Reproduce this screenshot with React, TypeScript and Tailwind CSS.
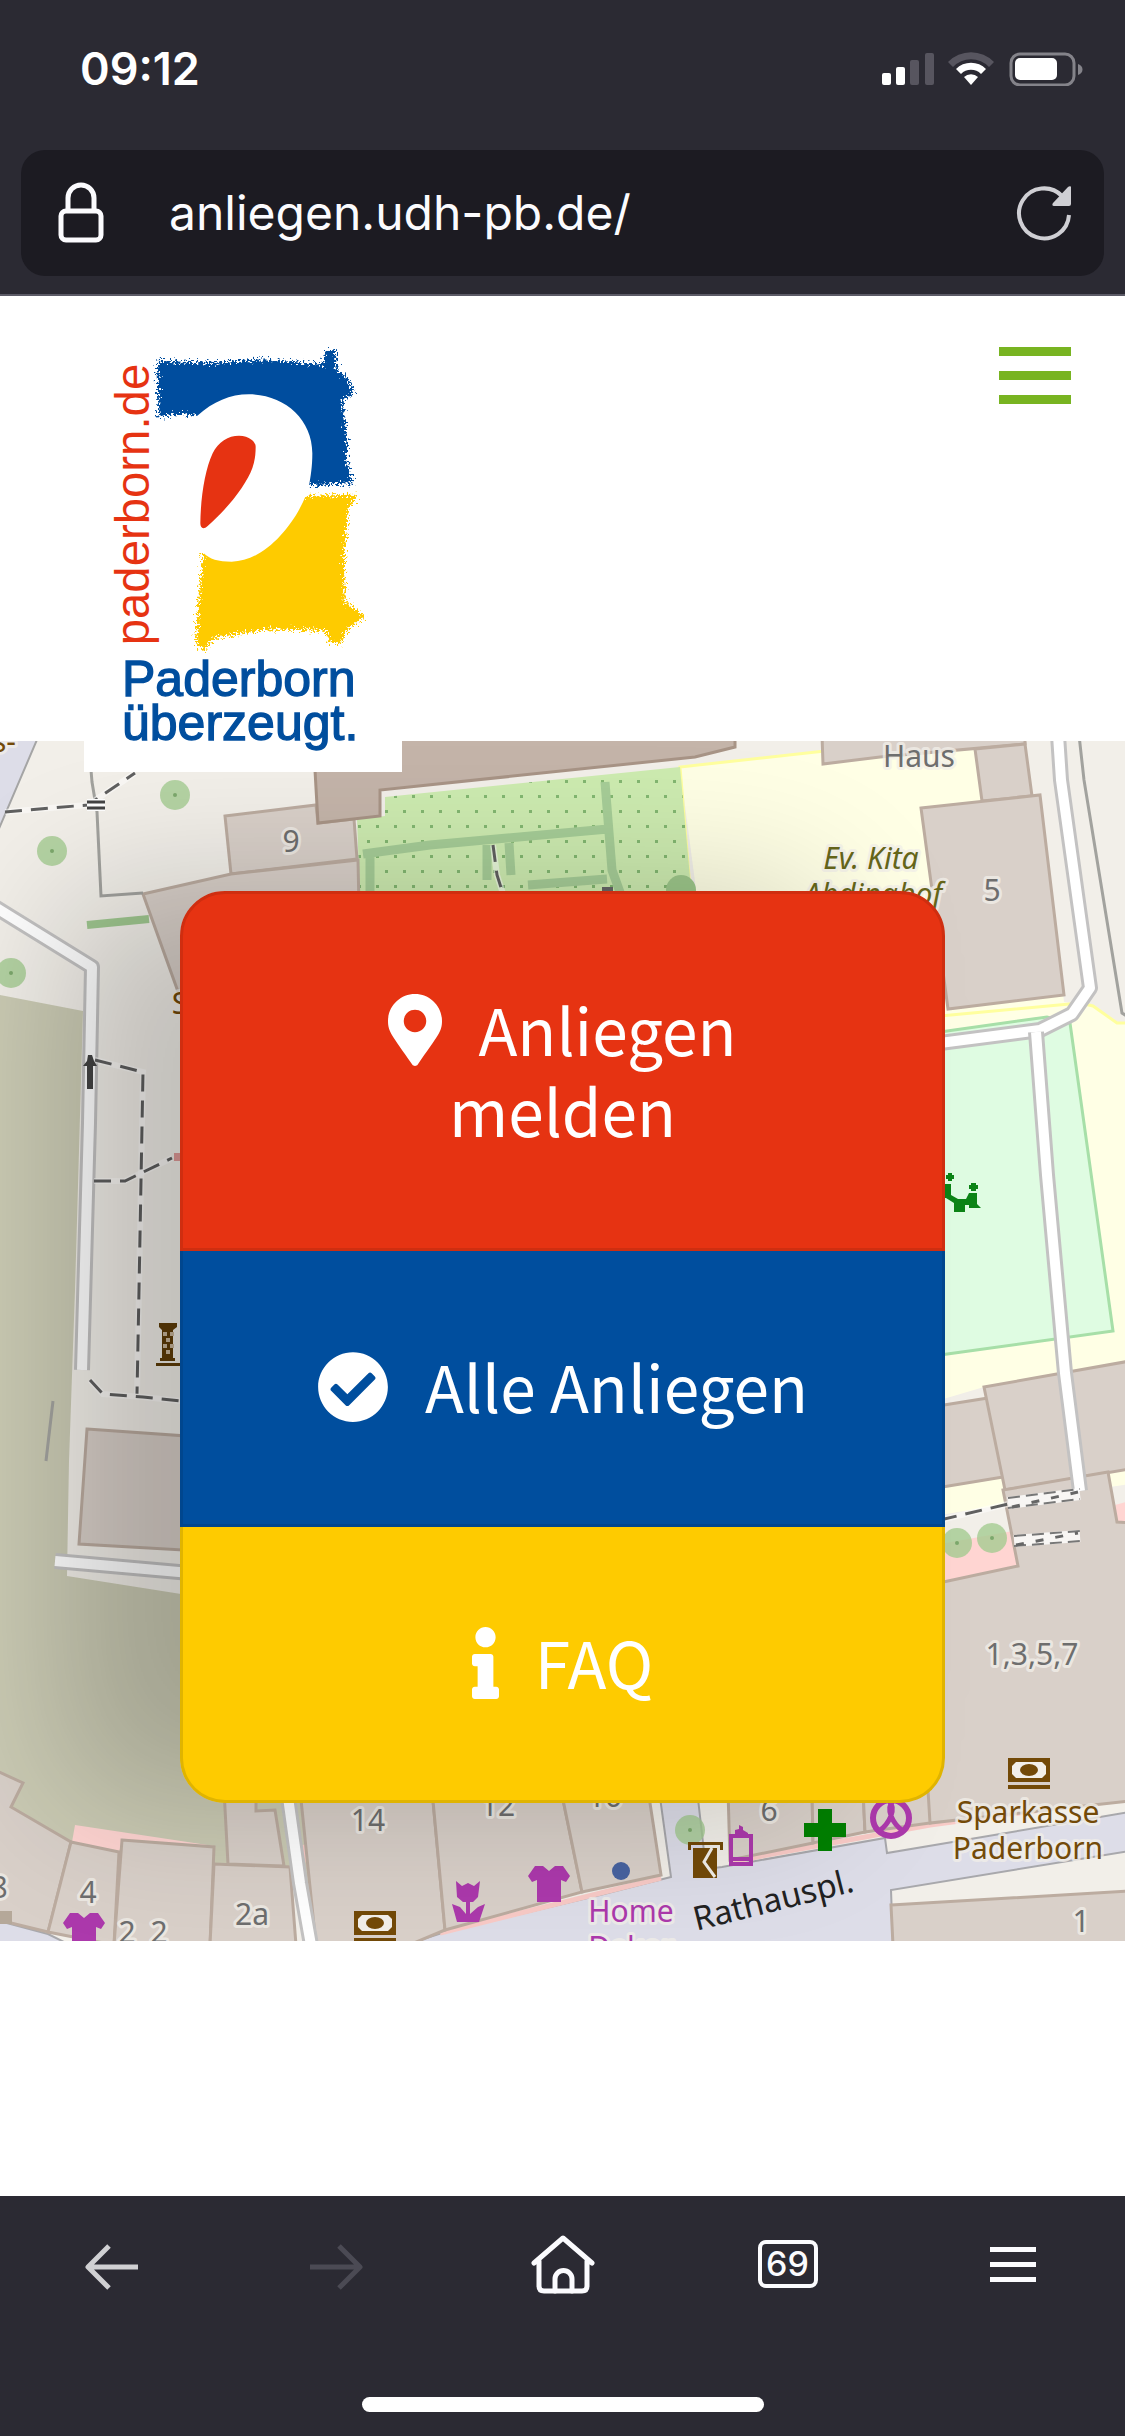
import type { ReactNode } from "react";
import { FaCheckCircle, FaInfo, FaMapMarkerAlt } from "react-icons/fa";

interface MapLabel {
  text: string;
  x: number;
  y: number;
  color?: string;
  italic?: boolean;
}

interface MenuEntry {
  label: string;
  href: string;
  icon: ReactNode;
  className: string;
}

const BUILDING = "#d9d0c9";
const BUILDING_EDGE = "#bcaca0";
const PLAZA = "#dddde8";
const LAND = "#f2efe9";
const BROWN = "#734a08";
const PURPLE = "#ac39ac";

const BUILDINGS = [
  "225,816 316,805 318,823 354,819 357,859 231,874",
  "143,894 231,874 358,860 361,1000 181,1000",
  "822,735 823,764 880,757 1025,744 1025,735",
  "975,749 1025,744 1032,796 982,801",
  "921,808 1040,795 1064,995 948,1009",
  "900,1412 988,1398 1003,1477 900,1494",
  "984,1387 1130,1361 1130,1469 1005,1490",
  "1003,1490 1108,1472 1117,1522 1130,1523 1130,1801 930,1823 920,1780 920,1587 1018,1566",
  "87,1429 200,1437 200,1551 79,1544",
  "-5,1770 23,1783 11,1807 71,1842 48,1932 11,1923 -5,1920",
  "71,1842 119,1852 114,1945 48,1932",
  "122,1840 214,1847 210,1945 114,1945",
  "214,1864 290,1867 296,1945 210,1945",
  "224,1790 228,1864 284,1866 275,1810 256,1811 256,1790",
  "300,1790 432,1790 445,1930 409,1945 316,1945",
  "432,1790 561,1790 582,1892 445,1930",
  "561,1790 648,1790 661,1875 582,1892",
  "728,1790 812,1790 813,1843 730,1860",
  "812,1790 863,1790 865,1832 813,1843",
  "863,1790 928,1790 930,1823 865,1832",
  "891,1905 1130,1891 1130,1945 893,1945",
];

const TREES = [
  [175, 795],
  [52, 851],
  [11, 973],
  [957, 1543],
  [992, 1538],
  [690, 1830],
];

const WALKS = [
  "-5,907 92,967 89,1123 82,1370",
  "55,1561 190,1573",
  "1058,735 1061,780 1090,988 1072,1014 1040,1030 940,1043",
  "1036,1032 1047,1175 1065,1373 1080,1491",
  "287,1790 300,1883 311,1945",
];

const DASHED = [
  "5,812 50,808 88,805 135,773",
  "95,1060 143,1072 139,1290 137,1394",
  "94,1181 125,1181 172,1158",
  "90,1380 103,1394 143,1397 190,1402",
  "493,845 497,875 505,900",
  "940,1520 1008,1504",
];

const LABELS: MapLabel[] = [
  { text: "9", x: 291, y: 852 },
  { text: "Haus", x: 919, y: 767 },
  { text: "5", x: 992, y: 901 },
  { text: "1,3,5,7", x: 1032, y: 1665 },
  { text: "14", x: 368, y: 1831 },
  { text: "12", x: 498, y: 1816 },
  { text: "10", x: 605, y: 1807 },
  { text: "6", x: 769, y: 1821 },
  { text: "4", x: 88, y: 1903 },
  { text: "2", x: 127, y: 1943 },
  { text: "2", x: 159, y: 1943 },
  { text: "2a", x: 252, y: 1925 },
  { text: "8", x: -1, y: 1898 },
  { text: "1", x: 1081, y: 1932 },
  { text: "Ev. Kita", x: 871, y: 869, color: "#66661a", italic: true },
  { text: "Abdinghof", x: 873, y: 905, color: "#66661a", italic: true },
  { text: "s-", x: 4, y: 752, color: BROWN },
  { text: "S", x: 180, y: 1014, color: BROWN },
  { text: "Sparkasse", x: 1028, y: 1823, color: BROWN },
  { text: "Paderborn", x: 1028, y: 1859, color: BROWN },
  { text: "Home", x: 631, y: 1922, color: PURPLE },
  { text: "Dekor", x: 631, y: 1958, color: PURPLE },
];

function BankIcon({ x, y }: { x: number; y: number }) {
  return (
    <g transform={`translate(${x} ${y})`}>
      <path fill={BROWN} d="M0 0h42v24H0zM0 27h42v4H0z" />
      <path fill={LAND} d="M8 4h26l4 4v8l-4 4H8l-4-4V8z" />
      <ellipse cx="21" cy="12" rx="9" ry="6" fill={BROWN} />
    </g>
  );
}

function ShirtIcon({ x, y }: { x: number; y: number }) {
  return (
    <path
      transform={`translate(${x} ${y})`}
      fill={PURPLE}
      d="M7 0h8l6 5 6-5h8l7 10-4 6-5-2v22H9V14l-5 2-4-6z"
    />
  );
}

function CityMap() {
  return (
    <svg
      className="absolute inset-0 h-full w-full"
      viewBox="0 741 1125 1200"
      preserveAspectRatio="xMidYMid slice"
      aria-hidden="true"
    >
      <defs>
        <pattern id="garden" x="394" y="795" width="18" height="30" patternUnits="userSpaceOnUse">
          <rect width="18" height="30" fill="#cdebb0" />
          <rect x="0" y="0" width="3" height="3" fill="#83b771" />
          <rect x="9" y="15" width="3" height="3" fill="#83b771" />
        </pattern>
      </defs>

      <rect x="0" y="741" width="1125" height="1200" fill={LAND} />
      <path d="M-5 735H39L-5 838z" fill={PLAZA} stroke="#a5a5a5" strokeWidth="2" />

      {/* school grounds and playground */}
      <path
        d="M680 767 825 751 975 748 981 800 1040 795 1064 1002 1093 1006 1117 1023 1130 1024V1362L984 1387 940 1400V1016L700 920z"
        fill="#ffffe5"
      />
      <path d="M691 900 680 767 825 751M940 1016 1080 1003 1093 1006 1117 1023H1130" fill="none" stroke="#ffff9e" strokeWidth="3" />
      <path d="M940 1488 1005 1476 1008 1504 940 1515zM1108 1472 1130 1468V1484L1110 1487z" fill="#ffffe5" />
      <path d="M940 1032 1047 1017 1070 1023 1113 1331 940 1355z" fill="#dffce2" stroke="#a7dfa8" strokeWidth="3" />

      {/* park and garden */}
      <path d="M-5 994 83 1011 75 1290 69 1461 67 1576 181 1594 600 1620V1803L300 1890-5 1850z" fill="#cbcbb4" />
      <path d="M385 797 680 767 692 900H360L357 819 385 816z" fill="url(#garden)" />
      <path
        d="M363 854 430 845 608 829M605 782 612 870 621 895M370 856V900M487 845V880M509 843 511 875M528 885 607 879"
        fill="none"
        stroke="#a6cd97"
        strokeWidth="9"
      />
      <circle cx="681" cy="890" r="15" fill="#9dc78a" />
      <rect x="602" y="887" width="11" height="8" fill="#666" />
      <path d="M87 925 149 919" stroke="#a0c890" strokeWidth="8" />

      {/* plazas */}
      <path
        d="M405 1945 445 1932 600 1895 671 1877 659 1790H697L706 1869 722 1867 885 1838 887 1853 1130 1812V1851L891 1890 893 1945z"
        fill={PLAZA}
        stroke="#a8a8ac"
        strokeWidth="2"
      />
      <path d="M-5 1920 48 1934 70 1945H-5z" fill={PLAZA} stroke="#a8a8ac" strokeWidth="2" />

      {/* paved strips */}
      <path
        d="M75 1825 214 1846 122 1842 119 1852 72 1842zM940 1544 1013 1531 1018 1566 940 1583zM1115 1505 1130 1501V1523H1118z"
        fill="#ffd5d2"
      />
      <path d="M440 1933 661 1878M730 1862 930 1825 1130 1798M303 1845 313 1878" fill="none" stroke="#f8cac6" strokeWidth="5" />
      <rect x="174" y="1153" width="8" height="8" fill="#e09a98" />

      {BUILDINGS.map((points) => (
        <polygon key={points} points={points} fill={BUILDING} stroke={BUILDING_EDGE} strokeWidth="3" />
      ))}
      <path
        d="M313 735H735V747L695 757 380 790V816L318 823z"
        fill="#c4b4a9"
        stroke="#a89486"
        strokeWidth="3"
      />
      <rect x="-2" y="1911" width="14" height="13" fill="#b5a899" />

      {/* fences */}
      <path
        d="M91 770 92 782 97 812 101 896 143 893M1079 735 1084 780 1122 1013 1130 1018M53 1401 49 1435 46 1461"
        fill="none"
        stroke="#a2a29e"
        strokeWidth="3"
      />

      {WALKS.map((points) => (
        <g key={points} fill="none" strokeLinejoin="round">
          <polyline points={points} stroke="#c3c2c2" strokeWidth="16" />
          <polyline points={points} stroke="#fff" strokeWidth="10" />
        </g>
      ))}

      {DASHED.map((points) => (
        <g key={points} fill="none">
          <polyline points={points} stroke="#fff" strokeOpacity="0.5" strokeWidth="6" />
          <polyline points={points} stroke="#606060" strokeWidth="3" strokeDasharray="17 9" />
        </g>
      ))}
      <g fill="none">
        <path d="M1008 1503 1080 1494M1014 1541 1080 1536" stroke="#fff" strokeWidth="12" strokeOpacity="0.8" />
        <path d="M1008 1498 1080 1489M1008 1508 1080 1499M1014 1546 1080 1541M1014 1536 1080 1531" stroke="#777" strokeWidth="2" strokeDasharray="12 6" />
        <path d="M1012 1507 1078 1492M1016 1545 1078 1533" stroke="#666" strokeWidth="3" strokeDasharray="8 12" />
      </g>

      {TREES.map(([x, y]) => (
        <g key={`${x}-${y}`}>
          <circle cx={x} cy={y} r="15" fill="#a3cb8f" fillOpacity="0.78" />
          <circle cx={x} cy={y} r="2" fill="#7ca86c" />
        </g>
      ))}

      {/* gate, cross and tower symbols */}
      <path d="M87 799h18v12H87z" fill="#fff" />
      <path d="M87 802h18M87 808h18" stroke="#444" strokeWidth="3" />
      <path d="M88 1055h4l2 6 3 5h-4v23h-6v-23h-4l4-5z" fill="#444" />
      <path d="M159 1323h18v4l-4 3v28h2v3h-15v-3h2v-28l-3-3zM156 1363h26v3h-26z" fill="#5f3d08" />
      <path d="M163 1332h4v4h-4zM170 1332h4v4h-4zM166 1338h4v4h-4zM163 1344h4v4h-4zM170 1344h4v4h-4zM166 1350h4v4h-4z" fill="#cbb89e" />
      <g fill="#0c8416">
        <path d="M948 1173h4v2h2v4h-2v2h-4v-2h-2v-4h2zM971 1183h5v2h2v4h-2v2h-5v-2h-2v-4h2z" />
        <path d="M940 1184h11v11l7 4h8l3-6h8v11l4 4h-12v-3h-4v7h-11v-9l-8-5h-6z" />
      </g>

      <BankIcon x={1008} y={1758} />
      <BankIcon x={354} y={1911} />
      <ShirtIcon x={63} y={1913} />
      <ShirtIcon x={528} y={1866} />
      <path
        fill={PURPLE}
        d="M456 1881 462 1886 468 1883 474 1886 480 1881 478 1897 473 1902H470V1914L478 1907 485 1904 479 1922H457L452 1904 460 1907 466 1914V1902H463L457 1897z"
      />
      <circle cx="621" cy="1871" r="9" fill="#4863a0" />
      <path d="M688 1842h35v8h-3v-5h-29v5h-3zM693 1848h24v30h-24z" fill={BROWN} />
      <path d="m712 1848-8 14 11 15" fill="none" stroke={LAND} strokeWidth="3" />
      <path d="M731 1836h20v28h-20zM731 1859h20" fill="none" stroke={PURPLE} strokeWidth="4" />
      <path d="M735 1835v-5l4-1v-4l4 2v3l5 3v2z" fill={PURPLE} />
      <path d="M818 1809h14v14h14v14h-14v14h-14v-14h-14v-14h14z" fill="#008000" />
      <circle cx="891" cy="1818" r="18" fill="none" stroke={PURPLE} strokeWidth="6" />
      <path d="M879 1831C889 1824 897 1809 889 1801M903 1831C893 1824 885 1809 893 1801" fill="none" stroke={PURPLE} strokeWidth="5" />

      <g className="font-['Noto_Sans',sans-serif] text-[30px]" textAnchor="middle">
        {LABELS.map((label) => (
          <text
            key={`${label.text}-${label.x}`}
            x={label.x}
            y={label.y}
            fill={label.color ?? "#6e6e6e"}
            stroke={LAND}
            strokeOpacity="0.75"
            strokeWidth="6"
            strokeLinejoin="round"
            paintOrder="stroke"
            fontStyle={label.italic ? "italic" : "normal"}
          >
            {label.text}
          </text>
        ))}
        <text transform="translate(776 1911) rotate(-14)" fill="#222" className="text-[33px]">
          Rathauspl.
        </text>
      </g>
    </svg>
  );
}

function Logo() {
  return (
    <svg className="block w-full" viewBox="12 0 954 1326" role="img" aria-label="Paderborn überzeugt.">
      <defs>
        <filter id="spray" x="-10%" y="-10%" width="120%" height="120%">
          <feTurbulence type="fractalNoise" baseFrequency="0.16" numOctaves="3" seed="4" result="noise" />
          <feDisplacementMap in="SourceGraphic" in2="noise" scale="46" xChannelSelector="R" yChannelSelector="G" />
        </filter>
      </defs>
      <rect x="12" width="954" height="1326" fill="#fff" />
      <g filter="url(#spray)">
        <path
          fill="#004e9e"
          d="M232 92 400 98 550 88 730 104 735 62 768 64 770 118 806 150 822 192 787 206 800 320 802 400 818 460 680 466 500 300 352 257 335 256C300 248 270 252 236 264z"
        />
        <path
          fill="#fecb00"
          d="M660 498 826 494 828 512 806 530 800 600 792 690 794 815 856 860 804 896 784 940 748 938 738 902 560 898 400 925 376 964 348 940 356 800 370 660 500 600z"
        />
      </g>
      <path
        fill="#fff"
        d="M352 257C400 215 450 193 507 193C610 193 697 265 697 370C697 410 692 440 687 468L678 496C640 590 550 695 455 695C415 695 388 687 370 668L300 600V274L335 259z"
      />
      <path
        fill="#e63312"
        d="M361 580C362 500 375 420 398 370C415 335 445 317 477 317C508 317 527 335 527 350C527 400 515 428 485 474C455 518 420 555 383 588C370 600 361 595 361 580z"
      />
      <g className="font-['Liberation_Sans',sans-serif]">
        <text transform="translate(208 946) rotate(-90)" fill="#e63312" className="text-[142px]">
          paderborn.de
        </text>
        <g fill="#004e9e" stroke="#004e9e" strokeWidth="4" className="text-[150px]">
          <text x="126" y="1097">Paderborn</text>
          <text x="126" y="1231">überzeugt.</text>
        </g>
      </g>
    </svg>
  );
}

function StatusIcons() {
  return (
    <svg className="h-[34px] w-[202px]" viewBox="0 0 202 34" aria-hidden="true">
      <rect x="0" y="21" width="9" height="12" rx="2" fill="#fff" />
      <rect x="14" y="15" width="9" height="18" rx="2" fill="#fff" />
      <rect x="28" y="8" width="9" height="25" rx="2" fill="#57555f" />
      <rect x="43" y="1" width="9" height="32" rx="2" fill="#57555f" />
      <path d="M66 10A32 32 0 0 1 112 10L107 15A25 25 0 0 0 71 15z" fill="#57555f" />
      <path d="M74 17A21 21 0 0 1 104 17L99 22A14 14 0 0 0 79 22z" fill="#fff" />
      <path d="M82 25A10 10 0 0 1 96 25L89 33z" fill="#fff" />
      <rect x="129" y="2" width="63" height="31" rx="9" fill="none" stroke="#84838a" strokeWidth="3" />
      <rect x="133" y="6" width="42" height="22" rx="5" fill="#fff" />
      <path d="M196 12c6 2 6 9 0 11z" fill="#84838a" />
    </svg>
  );
}

function BrowserTop() {
  return (
    <header className="border-b-2 border-[#5b5a66] bg-[#2b2a33] font-[Inter,sans-serif]">
      <div className="flex h-[150px] items-center justify-between pt-[2px] pr-[41px] pb-[14px] pl-20">
        <time className="text-[45px] font-semibold text-white">09:12</time>
        <StatusIcons />
      </div>
      <div className="px-[21px] pb-[18px]">
        <div className="flex h-[126px] items-center rounded-3xl bg-[#1c1b22] px-8">
          <button type="button" aria-label="Verbindung ist sicher" className="shrink-0 px-1">
            <svg className="h-[62px] w-12" viewBox="0 0 48 62" fill="none" stroke="#fbfbfe" strokeWidth="5">
              <rect x="4" y="29" width="40" height="29" rx="5" />
              <path d="M11 29V16a13 13 0 0 1 26 0v13" />
            </svg>
          </button>
          <input
            type="text"
            aria-label="Adresse"
            defaultValue="anliegen.udh-pb.de/"
            className="ml-[60px] min-w-0 flex-1 bg-transparent text-[48px] text-[#fbfbfe] outline-none"
          />
          <button type="button" aria-label="Neu laden" className="shrink-0">
            <svg className="h-14 w-14" viewBox="0 0 56 56">
              <path d="M53 30A25 25 0 1 1 46 11" fill="none" stroke="#cfcfd4" strokeWidth="4" />
              <path d="M55 2v17a2 2 0 0 1-2 2H38c-2 0-2-2-1-3L52 2c1-1 3-1 3 0z" fill="#cfcfd4" />
            </svg>
          </button>
        </div>
      </div>
    </header>
  );
}

function BrowserBottom() {
  return (
    <footer className="mt-auto flex h-[240px] flex-col items-center justify-between bg-[#2b2a33] pb-6 font-[Inter,sans-serif]">
      <nav className="grid w-full grid-cols-5 items-center justify-items-center pt-9" aria-label="Browser">
        <button type="button" aria-label="Zurück">
          <svg className="h-16 w-16" viewBox="0 0 64 64" fill="none" stroke="#d0d0d3" strokeWidth="5">
            <path d="M57 35H7M28 14 7 35l21 21" strokeLinejoin="round" />
          </svg>
        </button>
        <button type="button" aria-label="Vorwärts" disabled>
          <svg className="h-16 w-16" viewBox="0 0 64 64" fill="none" stroke="#4b4a54" strokeWidth="5">
            <path d="M4 35h50M33 14l21 21-21 21" strokeLinejoin="round" />
          </svg>
        </button>
        <button type="button" aria-label="Startseite">
          <svg className="h-16 w-16" viewBox="0 0 64 64" fill="none" stroke="#fbfbfe" strokeWidth="5" strokeLinejoin="round" strokeLinecap="round">
            <path d="M3 31 32 6l29 25M8 29v25q0 5 5 5h38q5 0 5-5V29" />
            <path d="M24 59V47a8 8 0 0 1 17 0v12" />
          </svg>
        </button>
        <button
          type="button"
          aria-label="69 Tabs"
          className="flex h-12 w-[60px] items-center justify-center rounded-lg border-4 border-[#fbfbfe] text-[34px] leading-none font-medium text-[#fbfbfe]"
        >
          69
        </button>
        <button type="button" aria-label="Menü" className="flex w-[46px] flex-col gap-[10px]">
          <span className="h-[5px] bg-[#fbfbfe]" />
          <span className="h-[5px] bg-[#fbfbfe]" />
          <span className="h-[5px] bg-[#fbfbfe]" />
        </button>
      </nav>
      <div className="h-[15px] w-[402px] rounded-full bg-white" />
    </footer>
  );
}

const MENU: MenuEntry[] = [
  {
    label: "Anliegen melden",
    href: "#melden",
    icon: <FaMapMarkerAlt className="inline h-[72px] w-[54px] align-[-10px]" />,
    className: "rounded-t-[45px] border-t-3 border-[#cf2e10] bg-[#e63312]",
  },
  {
    label: "Alle Anliegen",
    href: "#alle",
    icon: <FaCheckCircle className="inline h-[72px] w-[72px] align-[-10px]" />,
    className: "border-[#00468e] bg-[#004e9e]",
  },
  {
    label: "FAQ",
    href: "#faq",
    icon: <FaInfo className="inline h-[72px] w-[27px] align-[-10px]" />,
    className: "rounded-b-[45px] border-[#e0b400] bg-[#fecb00]",
  },
];

export default function App() {
  return (
    <div className="flex min-h-screen flex-col bg-white">
      <BrowserTop />

      <div className="relative z-10 flex items-start justify-between pt-[34px] pr-[54px] pl-[84px]">
        <a href="#start" className="-mb-[31px] w-[318px]">
          <Logo />
        </a>
        <button type="button" aria-label="Navigation öffnen" className="mt-[17px] flex w-[72px] flex-col gap-[15px]">
          <span className="h-[9px] bg-[#78b421]" />
          <span className="h-[9px] bg-[#78b421]" />
          <span className="h-[9px] bg-[#78b421]" />
        </button>
      </div>

      <main className="relative overflow-hidden pt-[150px] pb-[138px]">
        <CityMap />
        <nav
          aria-label="Anliegen"
          className="relative mx-auto w-[68%] rounded-[45px] text-center font-['Noto_Sans_CJK_SC','Noto_Sans',sans-serif] text-[64px] leading-[81px] text-white shadow-[-120px_0_150px_rgba(0,0,0,0.2)]"
        >
          {MENU.map((entry) => (
            <a key={entry.href} href={entry.href} className={`block border-x-3 border-b-3 px-24 pt-[94px] pb-[98px] ${entry.className}`}>
              {entry.icon}
              <span className="ml-9">{entry.label}</span>
            </a>
          ))}
        </nav>
      </main>

      <BrowserBottom />
    </div>
  );
}
